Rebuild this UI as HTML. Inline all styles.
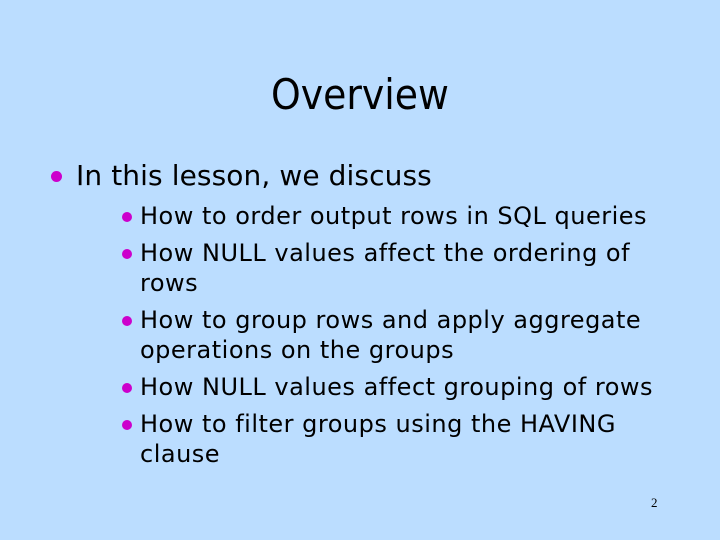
<!DOCTYPE html>
<html><head><meta charset="utf-8"><style>
body{margin:0;width:720px;height:540px;background:#BBDDFF;position:relative;overflow:hidden;font-family:"DejaVu Sans",sans-serif;color:#000;font-variant-ligatures:none}
div{position:absolute;white-space:nowrap;line-height:1}
.t{left:0;width:720px;text-align:center;top:74px;font-size:42px;font-family:"DejaVu Sans Condensed","DejaVu Sans",sans-serif}
.m{left:76px;top:162px;font-size:28px;letter-spacing:0.1px}
.s{left:140px;font-size:24px;letter-spacing:0.5px}
.b{position:absolute;border-radius:50%;background:#CC00CC}
</style></head><body>
<div class="t">Overview</div>
<span class="b" style="left:51px;top:171px;width:11px;height:11px"></span>
<div class="m">In this lesson, we discuss</div>
<span class="b" style="left:122px;top:212px;width:10px;height:10px"></span>
<div class="s" style="top:204px">How to order output rows in SQL queries</div>
<span class="b" style="left:122px;top:249px;width:10px;height:10px"></span>
<div class="s" style="top:241px">How NULL values affect the ordering of</div>
<div class="s" style="top:271px">rows</div>
<span class="b" style="left:122px;top:316px;width:10px;height:10px"></span>
<div class="s" style="top:308px">How to group rows and apply aggregate</div>
<div class="s" style="top:338px">operations on the groups</div>
<span class="b" style="left:122px;top:383px;width:10px;height:10px"></span>
<div class="s" style="top:375px">How NULL values affect grouping of rows</div>
<span class="b" style="left:122px;top:420px;width:10px;height:10px"></span>
<div class="s" style="top:412px">How to filter groups using the HAVING</div>
<div class="s" style="top:442px">clause</div>
<div style="left:651px;top:496px;font-size:13px;font-family:'Liberation Serif',serif">2</div>
</body></html>
